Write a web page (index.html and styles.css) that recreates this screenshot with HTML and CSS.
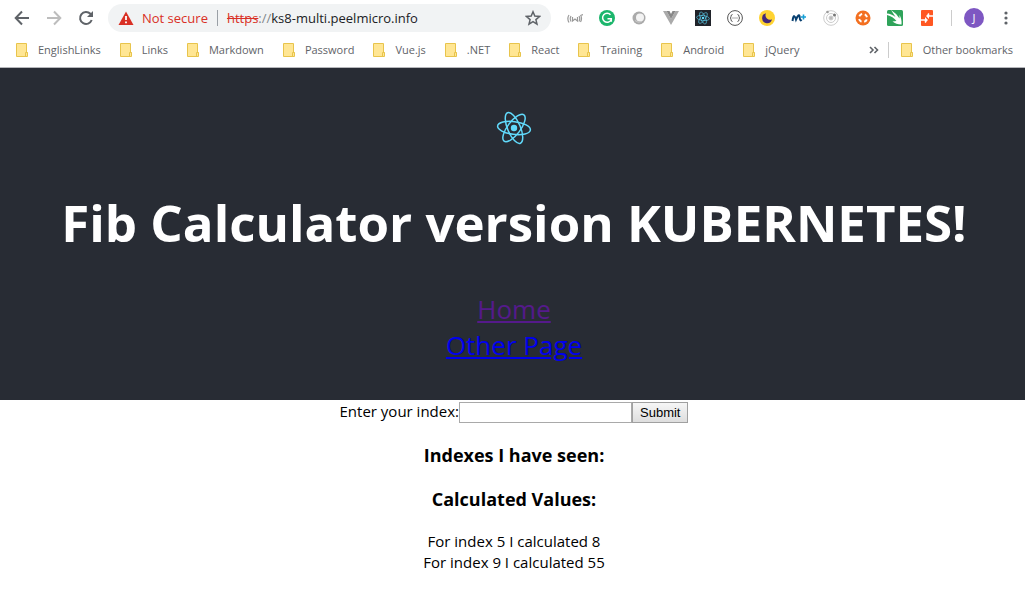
FILE: index.html
```html
<!DOCTYPE html>
<html lang="en">
<head>
<meta charset="utf-8">
<title>Fib Calculator</title>
<link rel="stylesheet" href="styles.css">
</head>
<body>
<svg class="defs" aria-hidden="true">
  <symbol id="folder" viewBox="0 0 12 14"><path d="M.5.5h10v9h1v4H.5z" fill="#ffe694" stroke="#e8c44c"/><path d="M9.5 13V9.5h2" fill="none" stroke="#e8c44c"/></symbol>
  <symbol id="atom" viewBox="0 0 36 36"><g fill="none" stroke="#61dafb" stroke-width="1.5" transform="rotate(7 18 18)"><ellipse cx="18" cy="18" rx="16.5" ry="6.4"/><ellipse cx="18" cy="18" rx="16.5" ry="6.4" transform="rotate(60 18 18)"/><ellipse cx="18" cy="18" rx="16.5" ry="6.4" transform="rotate(120 18 18)"/></g><circle cx="18" cy="18" r="3.2" fill="#61dafb"/></symbol>
</svg>
<div class="toolbar">
  <nav class="history">
    <button class="tool" aria-label="Back"><svg width="16" height="16" viewBox="0 0 16 16" fill="none" stroke="#5f6368" stroke-width="2"><path d="M15 8H2M8 1.5 1.7 8 8 14.5"/></svg></button>
    <button class="tool" aria-label="Forward"><svg width="16" height="16" viewBox="0 0 16 16" fill="none" stroke="#bdbdbd" stroke-width="2"><path d="M1 8h13M8 1.5 14.3 8 8 14.5"/></svg></button>
    <button class="tool" aria-label="Reload"><svg width="16" height="16" viewBox="0 0 16 16"><path d="M13.7 10A6 6 0 1 1 12.4 3.8L14 5.4" fill="none" stroke="#5f6368" stroke-width="2"/><path d="M15 1v6H9z" fill="#5f6368"/></svg></button>
  </nav>
  <div class="omnibox">
    <svg width="16" height="14" viewBox="0 0 16 14"><path d="M8 .5 15.5 14H.5z" fill="#d93025"/><path d="M8 5v4M8 10.4v1.8" stroke="#fff" stroke-width="1.8"/></svg>
    <span class="warning">Not secure</span>
    <span class="address"><s>https</s><span class="slashes">://</span>ks8-multi.peelmicro.info</span>
    <button class="tool" aria-label="Bookmark this page"><svg width="16" height="16" viewBox="0 0 16 16"><path d="m8 1.8 1.8 4.3 4.7.4-3.6 3.1 1.1 4.6L8 11.7l-4 2.5 1.1-4.6-3.6-3.1 4.7-.4z" fill="none" stroke="#5f6368" stroke-width="1.5"/></svg></button>
  </div>
  <div class="extensions">
    <svg width="16" height="16" viewBox="0 0 16 16" fill="none" stroke="#999" stroke-width="1.2"><path d="M2 5Q-.3 8.500 2 12.500M4 6Q2.500 8.500 4 11.500M5.500 7v4l2.500-2 2.500 2V7M12 6q1.500 2.500 0 5.500M13.500 5q2 3.500 0 7M13.500 5.500l2.500-1"/></svg>
    <svg width="16" height="16" viewBox="0 0 16 16"><circle cx="8" cy="8" r="8" fill="#1cb66c"/><path d="M11.500 4.800A4.500 4.500 0 1 0 12 10M8.500 8.700h3.800v3" fill="none" stroke="#fff" stroke-width="1.500"/></svg>
    <svg width="16" height="16" viewBox="0 0 16 16"><circle cx="8" cy="8" r="6.500" fill="#aaa"/><circle cx="9" cy="7.500" r="4" fill="#f3f3f3"/><path d="M4 10.500q3 3 7 1" fill="none" stroke="#ccc"/></svg>
    <svg width="16" height="16" viewBox="0 0 16 16"><path d="M0 1h3.500L8 9l4.500-8H16L8 15z" fill="#aaa"/><path d="M3.500 1H6.500L8 4l1.500-3h3L8 9z" fill="#888"/></svg>
    <svg width="16" height="16" viewBox="0 0 16 16"><path d="M0 0h16v16H0z" fill="#20232a"/><use href="#atom" x="1" y="1" width="14" height="14"/></svg>
    <svg width="16" height="16" viewBox="0 0 16 16" fill="none" stroke="#555"><circle cx="8" cy="8" r="7.400"/><path d="M5.500 4.500q-1.500 0-1.500 2 0 1.500-1 1.500 1 0 1 1.500 0 2 1.500 2M10.500 4.500q1.500 0 1.500 2 0 1.500 1 1.500-1 0-1 1.500 0 2-1.500 2M5.500 8h1M7.500 8h1M9.500 8h1"/></svg>
    <svg width="16" height="16" viewBox="0 0 16 16"><circle cx="8" cy="8" r="8" fill="#ffd331"/><path d="M7 3.300a5 5 0 1 0 6 6A4.500 4.500 0 0 1 7 3.300z" fill="#43297a"/></svg>
    <svg width="16" height="16" viewBox="0 0 16 16" fill="none"><path d="M1.500 11C2.500 3.500 4 6 5 9.500 7 5 8.500 3.500 8.700 7.500 9 11.500 10 10.500 10.500 9.500" stroke="#073f70" stroke-width="2"/><path d="M12.500 4.500v5M10 7h5" stroke="#159fd6" stroke-width="1.600"/></svg>
    <svg width="16" height="16" viewBox="0 0 16 16" fill="none" stroke="#ccc"><circle cx="8" cy="8" r="7.300"/><circle cx="8" cy="8" r="4.500"/><circle cx="8" cy="8" r="2" fill="#bbb"/><circle cx="11.500" cy="5" r="1.500" fill="#777" stroke="none"/><circle cx="4.500" cy="2" r="1.300" fill="#999" stroke="none"/></svg>
    <svg width="16" height="16" viewBox="0 0 16 16"><circle cx="8" cy="8" r="7.500" fill="#f37021"/><circle cx="8" cy="8" r="4" fill="none" stroke="#fff" stroke-width="2" stroke-dasharray="3.500 2.780" stroke-dashoffset="-1.400"/></svg>
    <svg width="16" height="16" viewBox="0 0 16 16"><rect width="16" height="16" rx="1.500" fill="#2fa35a"/><path d="M0 3.500Q4 3.500 8.500 7L4 0Q9 3 12.500 8.500V5Q15 9 14.500 14.500 9 14.500 5.500 11.500L9.500 11Q6 6.500 0 5z" fill="#fff"/></svg>
    <svg width="16" height="16" viewBox="0 0 16 16"><rect x="2" width="12" height="16" rx="1" fill="#ff5722"/><path d="M14 6H9.500V3.500M2 10h4.500v2.500" fill="none" stroke="#fff" stroke-width="1.500"/><path d="M7 6l3-3v6zM9 10l-3-3v6z" fill="#fff"/></svg>
  </div>
  <button class="avatar" aria-label="Profile J">J</button>
  <button class="tool" aria-label="Menu"><svg width="16" height="16" viewBox="0 0 16 16" fill="#5f6368"><circle cx="8" cy="3" r="1.600"/><circle cx="8" cy="8" r="1.600"/><circle cx="8" cy="13" r="1.600"/></svg></button>
</div>
<nav class="bookmarks">
  <button class="bookmark"><svg><use href="#folder"/></svg>EnglishLinks</button>
  <button class="bookmark"><svg><use href="#folder"/></svg>Links</button>
  <button class="bookmark"><svg><use href="#folder"/></svg>Markdown</button>
  <button class="bookmark"><svg><use href="#folder"/></svg>Password</button>
  <button class="bookmark"><svg><use href="#folder"/></svg>Vue.js</button>
  <button class="bookmark"><svg><use href="#folder"/></svg>.NET</button>
  <button class="bookmark"><svg><use href="#folder"/></svg>React</button>
  <button class="bookmark"><svg><use href="#folder"/></svg>Training</button>
  <button class="bookmark"><svg><use href="#folder"/></svg>Android</button>
  <button class="bookmark"><svg><use href="#folder"/></svg>jQuery</button>
  <div class="overflow">
    <button class="tool" aria-label="More bookmarks"><svg width="10" height="8" viewBox="0 0 10 8" fill="none" stroke="#5f6368" stroke-width="1.600"><path d="m1 1 3 3-3 3M5.500 1l3 3-3 3"/></svg></button>
    <button class="bookmark"><svg><use href="#folder"/></svg>Other bookmarks</button>
  </div>
</nav>
<header class="app-header">
  <svg class="logo" role="img" aria-label="React logo"><use href="#atom"/></svg>
  <h1>Fib Calculator version KUBERNETES!</h1>
  <a class="home" href="#">Home</a>
  <a class="other" href="#other">Other Page</a>
</header>
<main>
  <form>
    <label for="index">Enter your index:</label>
    <input id="index" type="text">
    <button type="submit">Submit</button>
  </form>
  <h3>Indexes I have seen:</h3>
  <h3>Calculated Values:</h3>
  <div>For index 5 I calculated 8</div>
  <div>For index 9 I calculated 55</div>
</main>
</body>
</html>
```
FILE: styles.css
```css
* { box-sizing: border-box; }
body { margin: 0; background: #fff; font: 15px/21px "Open Sans", "Noto Sans", sans-serif; color: #000; }
svg { display: block; flex: none; }
.defs { position: absolute; width: 0; height: 0; }
button { font-family: inherit; }
.tool { border: 0; padding: 0; background: none; }

.toolbar { display: flex; align-items: center; height: 36px; padding: 0 11px 0 14px; }
.history { display: flex; gap: 16px; margin-right: 14px; }
.omnibox { flex: 1; display: flex; align-items: center; height: 28px; padding: 0 10px; border-radius: 14px; background: #f1f3f4; font-size: 13px; line-height: 16px; }
.warning { margin-left: 8px; padding-right: 9px; border-right: 1px solid #9aa0a6; color: #d93025; }
.address { flex: 1; margin-left: 9px; color: #202124; }
.address s { color: #d93025; }
.slashes { color: #80868b; }
.extensions { display: flex; gap: 16px; margin-left: 16px; padding-right: 16px; border-right: 1px solid #ccc; }
.avatar { width: 20px; height: 20px; margin: 0 14px 0 12px; padding: 0; border: 0; border-radius: 50%; background: #7e57c2; color: #fff; font-size: 11px; line-height: 20px; }

.bookmarks { display: flex; align-items: center; gap: 19px; height: 32px; padding: 0 12px 4px 16px; border-bottom: 1px solid #b6b7bb; }
.bookmark { display: flex; align-items: center; gap: 10px; padding: 0; border: 0; background: none; color: #5f6368; font-size: 11px; line-height: 16px; white-space: nowrap; }
.bookmark svg { width: 12px; height: 14px; }
.overflow { display: flex; align-items: center; margin-left: auto; }
.overflow .tool { padding-right: 9px; }
.overflow .bookmark { padding-left: 12px; border-left: 1px solid #ccc; }

.app-header { display: flex; flex-direction: column; align-items: center; padding: 40px 0 37px 3px; background: #282c34; font-size: 26px; line-height: 36px; }
.logo { width: 36px; height: 40px; }
h1 { margin: 39px 0 34px; color: #fff; font-size: 51px; line-height: 70px; }
.home { color: #551a8b; }
.other { color: #00e; }

main { padding: 2px 0 0 3px; text-align: center; }
form { display: flex; justify-content: center; align-items: center; }
label { line-height: 19px; padding-bottom: 2px; }
input { width: 173px; height: 21px; padding: 1px 4px; border: 1px solid #a9a9a9; font: 13px "Liberation Sans", sans-serif; }
form button { height: 21px; padding: 0 7px; border: 1px solid #a0a0a0; background: linear-gradient(#f6f6f6, #dedede); font: 13px "Liberation Sans", sans-serif; }
h3 { margin: 20px 0; font-size: 18px; line-height: 24px; }
```
